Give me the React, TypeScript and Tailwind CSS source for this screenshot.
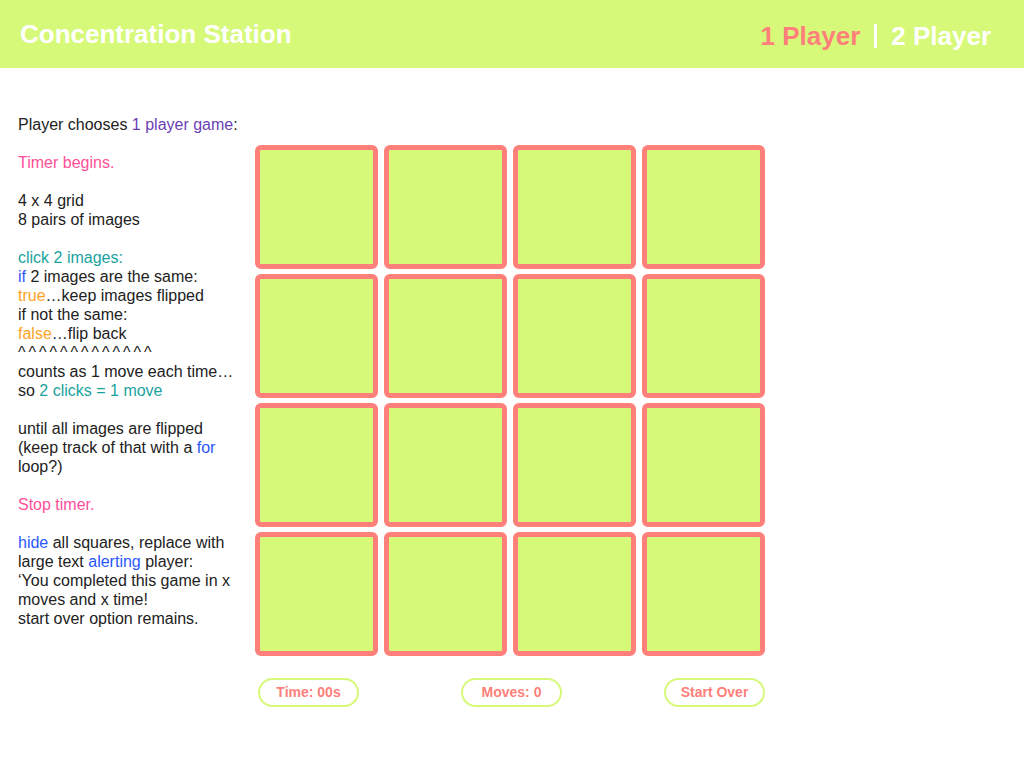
const lime = "bg-[#d6f97a]";

function Card() {
  return <div className={`h-[124px] w-[123px] rounded-[6px] border-[5px] border-[#ff7f7a] ${lime}`} />;
}

function Pill({ label }: { label: string }) {
  return (
    <div className="flex h-[29px] w-[101px] items-center justify-center rounded-full border-2 border-[#d6f97a] text-[14px] font-bold text-[#ff7f7a]">
      {label}
    </div>
  );
}

export default function App() {
  const cards = Array.from({ length: 16 });
  return (
    <div className="min-h-[768px] w-[1024px] bg-white font-['Liberation_Sans',Arial,sans-serif]">
      <header className={`flex h-[68px] items-center justify-between pl-[20px] pr-[33px] ${lime}`}>
        <h1 className="text-[26px] font-bold text-white">Concentration Station</h1>
        <div className="flex items-center pt-[4px] text-[26px] font-bold">
          <span className="text-[#ff7f7a]">1 Player</span>
          <span className="mx-[14px] h-[24px] w-[3px] bg-white" />
          <span className="text-white">2 Player</span>
        </div>
      </header>

      <main className="flex pl-[18px]">
        <div className="w-[237px] shrink-0 whitespace-nowrap pt-[47px] text-[16px] leading-[19px] text-[#222]">
          <p>
            Player chooses <span className="text-[#6b3fb5]">1 player game</span>:
          </p>
          <p className="mt-[19px] text-[#ff4f9a]">Timer begins.</p>
          <p className="mt-[19px]">
            4 x 4 grid
            <br />8 pairs of images
          </p>
          <p className="mt-[19px]">
            <span className="text-[#1aa39e]">click 2 images:</span>
            <br />
            <span className="text-[#2a57ff]">if</span> 2 images are the same:
            <br />
            <span className="text-[#ffa326]">true</span>…keep images flipped
            <br />
            if not the same:
            <br />
            <span className="text-[#ffa326]">false</span>…flip back
            <br />
            <span className="tracking-[3px]">^^^^^^^^^^^^^</span>
            <br />
            counts as 1 move each time…
            <br />
            so <span className="text-[#1aa39e]">2 clicks = 1 move</span>
          </p>
          <p className="mt-[19px]">
            until all images are flipped
            <br />
            (keep track of that with a <span className="text-[#2a57ff]">for</span>
            <br />
            loop?)
          </p>
          <p className="mt-[19px] text-[#ff4f9a]">Stop timer.</p>
          <p className="mt-[19px]">
            <span className="text-[#2a57ff]">hide</span> all squares, replace with
            <br />
            large text <span className="text-[#2a57ff]">alerting</span> player:
            <br />
            ‘You completed this game in x
            <br />
            moves and x time!
            <br />
            start over option remains.
          </p>
        </div>

        <div className="pt-[77px]">
          <div className="grid grid-cols-4 gap-x-[6px] gap-y-[5px]">
            {cards.map((_, i) => (
              <Card key={i} />
            ))}
          </div>
          <div className="mt-[22px] flex justify-between pl-[3px]">
            <Pill label="Time: 00s" />
            <Pill label="Moves: 0" />
            <Pill label="Start Over" />
          </div>
        </div>
      </main>
    </div>
  );
}
